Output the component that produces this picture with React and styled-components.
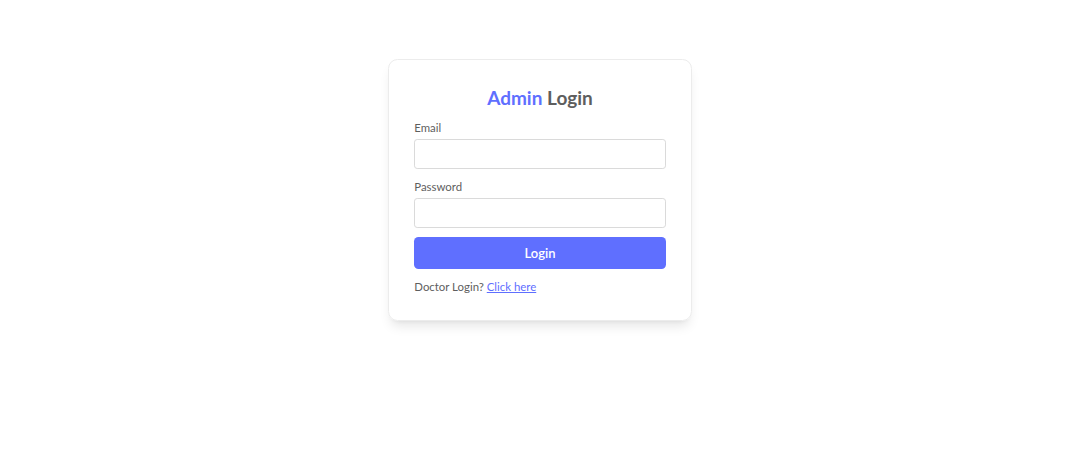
import React from "react";
import styled, { createGlobalStyle } from "styled-components";

const Global = createGlobalStyle`
  html, body { margin: 0; padding: 0; background: #ffffff; }
  body { font-family: "Lato", "Noto Sans", sans-serif; }
  * { box-sizing: border-box; }
`;

const Page = styled.form`
  min-height: 80vh;
  display: flex;
  align-items: center;
  margin: 0;
`;

const Card = styled.div`
  display: flex;
  flex-direction: column;
  align-items: flex-start;
  gap: 9.5px;
  margin: auto;
  padding: 25.3px;
  width: 304px;
  border: 1px solid #ececec;
  border-radius: 9.5px;
  color: #5e5e5e;
  font-size: 11.4px;
  line-height: 15.8px;
  box-shadow: 0 8px 12px -3px rgba(0, 0, 0, 0.1), 0 3px 5px -4px rgba(0, 0, 0, 0.1);
`;

const Title = styled.p`
  margin: 0 auto;
  font-size: 19px;
  line-height: 25.3px;
  font-weight: 700;
  color: #5e5e5e;
`;

const Accent = styled.span`
  color: #5f6fff;
`;

const Field = styled.div`
  width: 100%;
`;

const Label = styled.p`
  margin: 0;
`;

const Input = styled.input`
  display: block;
  width: 100%;
  margin-top: 3.2px;
  height: 30.4px;
  padding: 6.3px;
  border: 1px solid #dadada;
  border-radius: 3.2px;
  font: inherit;
  outline: none;
`;

const Button = styled.button`
  width: 100%;
  height: 31.6px;
  border: none;
  border-radius: 4.5px;
  background: #5f6fff;
  color: #ffffff;
  font-family: inherit;
  font-size: 13px;
  font-weight: 600;
  cursor: pointer;
`;

const Note = styled.p`
  margin: 0;
`;

const Link = styled.span`
  color: #5f6fff;
  text-decoration: underline;
  cursor: pointer;
`;

export default function App() {
  return (
    <>
      <Global />
      <Page onSubmit={(e) => e.preventDefault()}>
        <Card>
          <Title>
            <Accent>Admin</Accent> Login
          </Title>
          <Field>
            <Label>Email</Label>
            <Input type="email" />
          </Field>
          <Field>
            <Label>Password</Label>
            <Input type="password" />
          </Field>
          <Button type="submit">Login</Button>
          <Note>
            Doctor Login? <Link>Click here</Link>
          </Note>
        </Card>
      </Page>
    </>
  );
}
